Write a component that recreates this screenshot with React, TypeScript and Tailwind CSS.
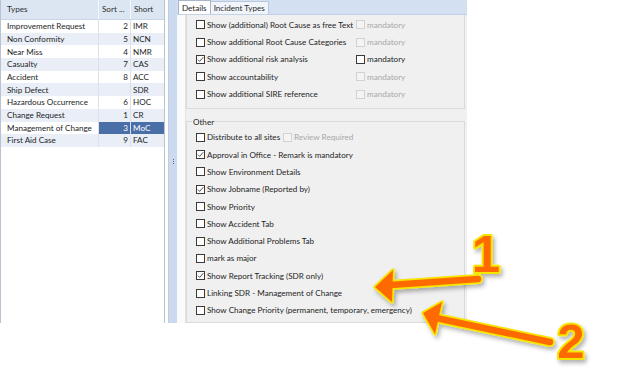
import React from "react";

type Row = { name: string; sort: string; short: string };

const rows: Row[] = [
  { name: "Improvement Request", sort: "2", short: "IMR" },
  { name: "Non Conformity", sort: "5", short: "NCN" },
  { name: "Near Miss", sort: "4", short: "NMR" },
  { name: "Casualty", sort: "7", short: "CAS" },
  { name: "Accident", sort: "8", short: "ACC" },
  { name: "Ship Defect", sort: "", short: "SDR" },
  { name: "Hazardous Occurrence", sort: "6", short: "HOC" },
  { name: "Change Request", sort: "1", short: "CR" },
  { name: "Management of Change", sort: "3", short: "MoC" },
  { name: "First Aid Case", sort: "9", short: "FAC" },
];

function Box({ checked = false, disabled = false }: { checked?: boolean; disabled?: boolean }) {
  return (
    <span
      className={
        disabled
          ? "w-[9px] h-[9px] shrink-0 border border-[#d2d2d2] bg-[#f4f4f4]"
          : "w-[9px] h-[9px] shrink-0 border border-[#3a3a3a] bg-white flex items-center justify-center"
      }
    >
      {checked && (
        <svg width="7" height="7" viewBox="0 0 7 7">
          <path d="M0.8 3.6 L2.6 5.4 L6.3 1.2" fill="none" stroke="#3a3a3a" strokeWidth="0.9" />
        </svg>
      )}
    </span>
  );
}

function Check({
  label,
  checked = false,
  extra,
  extraDisabled = true,
  col = 160,
}: {
  label: string;
  checked?: boolean;
  extra?: string;
  extraDisabled?: boolean;
  col?: number;
}) {
  return (
    <div className="h-[17.3px] flex items-center pl-[9px]">
      <div className="flex items-center" style={extra ? { width: col } : undefined}>
        <Box checked={checked} />
        <span className="ml-[2px] text-[#1e1e1e] whitespace-nowrap">{label}</span>
      </div>
      {extra && (
        <div className="flex items-center">
          <Box disabled={extraDisabled} />
          <span className={"ml-[2px] whitespace-nowrap " + (extraDisabled ? "text-[#a8a8a8]" : "text-[#1e1e1e]")}>
            {extra}
          </span>
        </div>
      )}
    </div>
  );
}

function Arrows() {
  return (
    <svg className="absolute left-0 top-0 pointer-events-none" width="619" height="390" viewBox="0 0 619 390">
      <defs>
        <filter id="sh" x="-20%" y="-20%" width="140%" height="160%">
          <feDropShadow dx="2" dy="3" stdDeviation="2.2" floodColor="#000" floodOpacity="0.3" />
        </filter>
      </defs>
      <g filter="url(#sh)">
        {/* arrow 1 */}
        <line x1="390" y1="285" x2="478" y2="279" stroke="#f5e600" strokeWidth="10" strokeLinecap="round" />
        <polygon points="375,287 393,270 392,302" fill="#f5e600" stroke="#f5e600" strokeWidth="3.5" strokeLinejoin="round" />
        <line x1="390" y1="285" x2="478" y2="279" stroke="#ff6a00" strokeWidth="6.5" strokeLinecap="round" />
        <polygon points="375,287 393,270 392,302" fill="#ff6a00" />
        {/* arrow 2 */}
        <line x1="436" y1="318" x2="550" y2="342" stroke="#f5e600" strokeWidth="10" strokeLinecap="round" />
        <polygon points="423,313 442,302 435,334" fill="#f5e600" stroke="#f5e600" strokeWidth="3.5" strokeLinejoin="round" />
        <line x1="436" y1="318" x2="550" y2="342" stroke="#ff6a00" strokeWidth="6.5" strokeLinecap="round" />
        <polygon points="423,313 442,302 435,334" fill="#ff6a00" />
        <text
          x="486"
          y="272"
          textAnchor="middle"
          fontFamily="'Liberation Sans', Arial, sans-serif"
          fontWeight="bold"
          fontSize="51"
          fill="#ff6a00"
          stroke="#f5e600"
          strokeWidth="4"
          strokeLinejoin="round"
          paintOrder="stroke"
        >
          1
        </text>
        <text
          x="571"
          y="358"
          textAnchor="middle"
          fontFamily="'Liberation Sans', Arial, sans-serif"
          fontWeight="bold"
          fontSize="49"
          fill="#ff6a00"
          stroke="#f5e600"
          strokeWidth="4"
          strokeLinejoin="round"
          paintOrder="stroke"
        >
          2
        </text>
      </g>
    </svg>
  );
}

export default function App() {
  return (
    <div className="relative w-[619px] h-[390px] bg-white overflow-hidden font-['Lato','Liberation_Sans',sans-serif] text-[8.1px] leading-none">
      <div className="flex w-[467px] h-[323px]">
        {/* Left grid panel */}
        <div className="w-[168px] h-full flex bg-white">
          <div className="w-[165px] h-full border-l border-r border-[#b8c2d0] flex flex-col">
            <div className="h-[20px] flex bg-[#dce6f3] border-b border-[#c9d6e8] text-[#2e2e2e]">
              <div className="w-[98px] pl-[6px] flex items-center border-r border-[#f4f7fb]">Types</div>
              <div className="w-[32px] pl-[3px] flex items-center border-r border-[#f4f7fb]">Sort ...</div>
              <div className="flex-1 pl-[3px] flex items-center">Short</div>
            </div>
            {rows.map((r, i) => {
              const sel = i === 8;
              const bg = i % 2 === 1 ? "bg-[#e9eef7]" : "bg-white";
              return (
                <div key={r.name} className={"h-[12.7px] flex text-[#1e1e1e] " + bg}>
                  <div className="w-[98px] pl-[6px] flex items-center border-r border-[#dbe2ec] whitespace-nowrap">
                    {r.name}
                  </div>
                  <div
                    className={
                      "w-[32px] pr-[2px] flex items-center justify-end border-r border-[#dbe2ec] " +
                      (sel ? "bg-[#4a6fa8] text-white" : "")
                    }
                  >
                    {r.sort}
                  </div>
                  <div className={"flex-1 pl-[2px] flex items-center " + (sel ? "bg-[#4a6fa8] text-white" : "")}>
                    {r.short}
                  </div>
                </div>
              );
            })}
            <div className="flex-1" />
          </div>
        </div>

        {/* Splitter */}
        <div className="w-[9px] h-full bg-[#cbdaef] border-l border-[#bccde6] flex flex-col items-center justify-center gap-[1px]">
          <span className="w-[1px] h-[1px] bg-[#5b6b80]" />
          <span className="w-[1px] h-[1px] bg-[#5b6b80]" />
          <span className="w-[1px] h-[1px] bg-[#5b6b80]" />
        </div>

        {/* Right tab panel */}
        <div className="w-[290px] h-full flex flex-col">
          <div className="h-[16px] bg-[#d3e0f2] flex items-end pl-[1px] border-b border-[#c2d2e8]">
            <div className="h-[14px] px-[3px] bg-white border border-b-0 border-[#a8b6ca] flex items-center text-[#1e1e1e]">
              Details
            </div>
            <div className="h-[13px] px-[3px] bg-[#f1f5fb] border border-l-0 border-b-0 border-[#b9c7da] flex items-center text-[#2a2a2a]">
              Incident Types
            </div>
          </div>
          <div className="flex-1 flex">
            <div className="w-[9px] h-full bg-[#fafafa] border-r border-[#e2e2e2]" />
            <div className="flex-1 bg-[#f0f0f0] pr-[2px] flex flex-col">
              <div className="border-l border-r border-b border-[#dadada] pt-[1px] pb-[5px]">
                <Check label="Show (additional) Root Cause as free Text" extra="mandatory" />
                <Check label="Show additional Root Cause Categories" extra="mandatory" />
                <Check label="Show additional risk analysis" checked extra="mandatory" extraDisabled={false} />
                <Check label="Show accountability" extra="mandatory" />
                <Check label="Show additional SIRE reference" extra="mandatory" />
              </div>
              <fieldset className="mt-[7px] border border-[#dadada] pt-[1px] pb-[3px]">
                <legend className="ml-[5px] px-[1px] leading-[12px] text-[#1e1e1e]">Other</legend>
                <Check label="Distribute to all sites" extra="Review Required" col={87} />
                <Check label="Approval in Office - Remark is mandatory" checked />
                <Check label="Show Environment Details" />
                <Check label="Show Jobname (Reported by)" checked />
                <Check label="Show Priority" />
                <Check label="Show Accident Tab" />
                <Check label="Show Additional Problems Tab" />
                <Check label="mark as major" />
                <Check label="Show Report Tracking (SDR only)" checked />
                <Check label="Linking SDR - Management of Change" />
                <Check label="Show Change Priority (permanent, temporary, emergency)" />
              </fieldset>
            </div>
          </div>
        </div>
      </div>
      <Arrows />
    </div>
  );
}
